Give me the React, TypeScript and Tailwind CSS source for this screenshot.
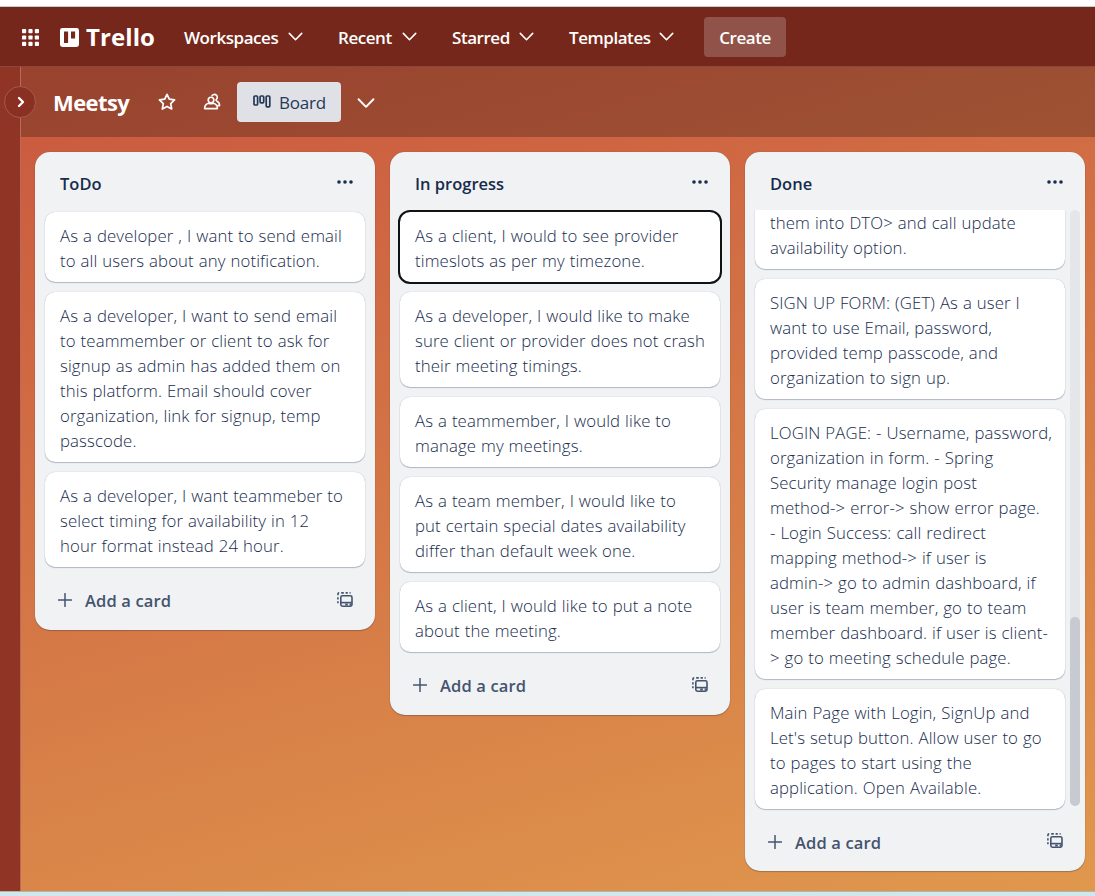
import React from "react";

type Card = { lines: string[]; selected?: boolean; clipped?: boolean };
type List = { title: string; cards: Card[]; scroll?: boolean };

const lists: List[] = [
  {
    title: "ToDo",
    cards: [
      { lines: ["As a developer , I want to send email", "to all users about any notification."] },
      {
        lines: [
          "As a developer, I want to send email",
          "to teammember or client to ask for",
          "signup as admin has added them on",
          "this platform. Email should cover",
          "organization, link for signup, temp",
          "passcode.",
        ],
      },
      {
        lines: [
          "As a developer, I want teammeber to",
          "select timing for availability in 12",
          "hour format instead 24 hour.",
        ],
      },
    ],
  },
  {
    title: "In progress",
    cards: [
      { lines: ["As a client, I would to see provider", "timeslots as per my timezone."], selected: true },
      {
        lines: [
          "As a developer, I would like to make",
          "sure client or provider does not crash",
          "their meeting timings.",
        ],
      },
      { lines: ["As a teammember, I would like to", "manage my meetings."] },
      {
        lines: [
          "As a team member, I would like to",
          "put certain special dates availability",
          "differ than default week one.",
        ],
      },
      { lines: ["As a client, I would like to put a note", "about the meeting."] },
    ],
  },
  {
    title: "Done",
    scroll: true,
    cards: [
      { lines: ["them into DTO> and call update", "availability option."], clipped: true },
      {
        lines: [
          "SIGN UP FORM: (GET) As a user I",
          "want to use Email, password,",
          "provided temp passcode, and",
          "organization to sign up.",
        ],
      },
      {
        lines: [
          "LOGIN PAGE: - Username, password,",
          "organization in form. - Spring",
          "Security manage login post",
          "method-> error-> show error page.",
          "- Login Success: call redirect",
          "mapping method-> if user is",
          "admin-> go to admin dashboard, if",
          "user is team member, go to team",
          "member dashboard. if user is client-",
          "> go to meeting schedule page.",
        ],
      },
      {
        lines: [
          "Main Page with Login, SignUp and",
          "Let's setup button. Allow user to go",
          "to pages to start using the",
          "application. Open Available.",
        ],
      },
    ],
  },
];

function Chevron({ size = 15 }: { size?: number }) {
  return (
    <svg width={size} height={size} viewBox="0 0 15 15" fill="none" stroke="white" strokeWidth="1.6" strokeLinecap="round" strokeLinejoin="round">
      <path d="M1.3 4.4 7.5 10.7 13.7 4.4" />
    </svg>
  );
}

function TemplateIcon() {
  return (
    <svg width="16" height="16" viewBox="0 0 16 16" fill="none" stroke="#44546f" strokeWidth="1.6">
      <rect x="3.8" y="3.8" width="11.2" height="10.4" rx="1.6" />
      <path d="M4 10.6h11" />
      <path d="M8.2 12.4h2.6M12.6 12.4h1.6" strokeWidth="2" />
      <path d="M.9 3.300V2.200Q.9.900 2.200.900M4.200.900h2.600M8.600.900h2.200M12.600.900h1M.9 5.200v2.200M.9 9.200v2.100" />
    </svg>
  );
}

function CardView({ card }: { card: Card }) {
  const frame = card.clipped
    ? "rounded-b-[10px] pb-[9px]"
    : card.selected
      ? "rounded-[10px] pt-[11px] pb-[9px] outline-2 outline-[#101214]"
      : "rounded-[10px] pt-[11px] pb-[9px]";
  return (
    <div className={"shrink-0 bg-white px-[15px] shadow-[0_1px_1px_#091e4240,0_0_1px_#091e424f] " + frame}>
      {card.lines.map((line, i) => (
        <p key={i} className="h-[25px] whitespace-nowrap leading-[25px]">
          {line}
        </p>
      ))}
    </div>
  );
}

function ListView({ list }: { list: List }) {
  return (
    <section className="w-[340px] shrink-0 rounded-[15px] bg-[#f1f2f4] text-[#172b4d] shadow-[0_1px_1px_#091e4240,0_0_1px_#091e424f]">
      <header className={"flex items-start justify-between pl-[25px] pr-[22px] pt-[19px] " + (list.scroll ? "h-[58px]" : "h-[60px]")}>
        <h2 className="text-[16.5px] font-semibold leading-[25px]">{list.title}</h2>
        <svg width="16" height="4" viewBox="0 0 16 4" fill="#172b4d" className="mt-[9px]">
          <circle cx="2" cy="2" r="1.8" />
          <circle cx="8" cy="2" r="1.8" />
          <circle cx="14" cy="2" r="1.8" />
        </svg>
      </header>
      <div className="flex">
        <div
          className={
            "flex flex-col gap-[10px] px-[10px] text-[16.75px] font-[350] tracking-[0.13px] [word-spacing:0.4px] " +
            (list.scroll ? "h-[602px] w-[325px] overflow-hidden pr-[5px]" : "w-[340px]")
          }
        >
          {list.cards.map((c, i) => (
            <CardView key={i} card={c} />
          ))}
        </div>
        {list.scroll && (
          <div className="flex h-[596px] w-[10px] flex-col justify-end rounded-full bg-[#e4e6ea]">
            <div className="h-[189px] rounded-full bg-[#c7cad1]" />
          </div>
        )}
      </div>
      <footer className={"flex items-start pl-[23px] pr-[22px] text-[#44546f] " + (list.scroll ? "h-[59px] pt-[18px]" : "h-[63px] pt-[21px]")}>
        <svg width="14" height="14" viewBox="0 0 14 14" stroke="#44546f" strokeWidth="1.5" strokeLinecap="round" className="mt-[5px]">
          <path d="M7 .6v12.800M.6 7h12.800" />
        </svg>
        <span className="ml-[13px] flex-1 text-[16.5px] font-semibold leading-[25px] tracking-[0.15px]">Add a card</span>
        <span className={list.scroll ? "mt-[3px]" : "mt-[4px]"}>
          <TemplateIcon />
        </span>
      </footer>
    </section>
  );
}

function NavItem({ label, width }: { label: string; width: string }) {
  return (
    <div className={"flex items-center justify-between " + width}>
      <span className="pt-[3px]">{label}</span>
      <Chevron />
    </div>
  );
}

export default function App() {
  return (
    <div className="flex h-[896px] w-[1095px] flex-col overflow-hidden bg-white font-['Open_Sans','Noto_Sans',sans-serif]">
      <div className="h-[7px] shrink-0 border-b border-[#c3cfc9] bg-white" />
      <nav className="flex h-[60px] shrink-0 items-center border-b border-[#8a473c] bg-[#76271b] pl-[22px] text-[17px] font-semibold tracking-[-0.45px] text-white">
        <svg width="17" height="17" viewBox="0 0 17 17" fill="white" className="mt-px">
          {[0, 6.4, 12.8].map((y) =>
            [0, 6.4, 12.8].map((x) => <rect key={`${x}-${y}`} x={x} y={y} width="4.2" height="4.2" rx="0.9" />)
          )}
        </svg>
        <svg width="19" height="19" viewBox="0 0 19 19" className="ml-[21px] mt-px">
          <path
            fill="white"
            fillRule="evenodd"
            d="M2.4 0h14.2A2.4 2.4 0 0 1 19 2.4v14.2a2.4 2.4 0 0 1-2.4 2.4H2.4A2.4 2.4 0 0 1 0 16.6V2.4A2.4 2.4 0 0 1 2.4 0ZM4 3.5v11.6h4.1V3.500ZM11 3.500v7h4.100v-7Z"
          />
        </svg>
        <span className="ml-[7px] w-[98px] text-[24px] font-bold leading-[30px] tracking-[0.1px]">Trello</span>
        <NavItem label="Workspaces" width="w-[119px]" />
        <div className="ml-[35px]">
          <NavItem label="Recent" width="w-[79px]" />
        </div>
        <div className="ml-[35px]">
          <NavItem label="Starred" width="w-[82px]" />
        </div>
        <div className="ml-[35px]">
          <NavItem label="Templates" width="w-[105px]" />
        </div>
        <button className="ml-[30px] h-[40px] w-[82px] rounded-[4px] bg-[#915349] pt-[2px]">Create</button>
      </nav>
      <div className="flex h-[824px] shrink-0 bg-[linear-gradient(164deg,#c9573f_0%,#e0984d_100%)]">
        <aside className="relative w-[21px] shrink-0 border-r border-[#b96a58] bg-[#903526]">
          <div className="absolute left-[4px] top-[19px] z-10 flex size-[32px] items-center justify-center rounded-full border border-[#a35a4c] bg-[#8a3022]">
            <svg width="8" height="12" viewBox="0 0 8 12" fill="none" stroke="white" strokeWidth="2.3" strokeLinecap="round" strokeLinejoin="round" className="ml-px">
              <path d="M2 2 6 6 2 10" />
            </svg>
          </div>
        </aside>
        <main className="flex flex-1 flex-col">
          <div className="flex h-[70px] shrink-0 items-center bg-[#0000003d] pl-[32px] text-white">
            <h1 className="w-[105px] text-[22px] font-bold tracking-[-0.6px]">Meetsy</h1>
            <svg width="18" height="18" viewBox="0 0 18 18" fill="none" stroke="white" strokeWidth="1.7" strokeLinejoin="round">
              <path d="m9 1.300 2.300 4.900 5.300.700-3.900 3.700 1 5.400L9 13.400 4.300 16l1-5.400-3.900-3.700 5.300-.700Z" />
            </svg>
            <svg width="18" height="18" viewBox="0 0 18 18" fill="none" stroke="white" strokeWidth="1.6" strokeLinejoin="round" strokeLinecap="round" className="ml-[27px]">
              <circle cx="8" cy="7" r="2.800" />
              <path d="M1.600 15.600c0-3.500 2.100-5 4.300-5.400q2.100 1 4.200 0c2.200.400 4.300 1.900 4.300 5.400Z" />
              <path d="M9 2.700a2.900 2.900 0 1 1 4.200 3.900q-.6.700.5 1.300c1.600.7 2.900 2.300 2.900 4.700h-1.800" />
            </svg>
            <div className="ml-[16px] flex h-[40px] w-[104px] items-center rounded-[4px] bg-[#dfe1e6] pl-[16px] text-[#253858]">
              <svg width="18" height="13" viewBox="0 0 18 13" fill="none" stroke="#253858" strokeWidth="1.700" className="-mt-[2px]">
                <rect x="1" y="1" width="3.600" height="9" rx="1" />
                <rect x="7.100" y="1" width="3.600" height="6.800" rx="1" />
                <rect x="13.200" y="1" width="3.600" height="10.800" rx="1" />
              </svg>
              <span className="ml-[8px] pt-px text-[17px] tracking-[-0.2px]">Board</span>
            </div>
            <span className="ml-[16px] mt-px">
              <Chevron size={18} />
            </span>
          </div>
          <div className="flex items-start gap-[15px] pl-[14px] pt-[15px]">
            {lists.map((l) => (
              <ListView key={l.title} list={l} />
            ))}
          </div>
        </main>
      </div>
      <div className="h-[5px] shrink-0 border-t border-[#b5b4a8] bg-[#cfe8ee]" />
    </div>
  );
}
